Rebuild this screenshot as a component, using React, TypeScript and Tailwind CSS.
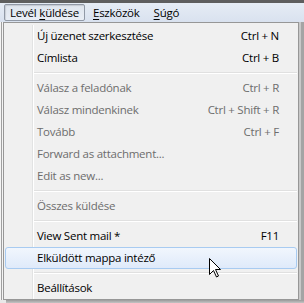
import React from "react";

type Item =
  | { kind: "item"; label: string; shortcut?: string; disabled?: boolean; active?: boolean }
  | { kind: "sep" };

const items: Item[] = [
  { kind: "item", label: "Új üzenet szerkesztése", shortcut: "Ctrl + N" },
  { kind: "item", label: "Címlista", shortcut: "Ctrl + B" },
  { kind: "sep" },
  { kind: "item", label: "Válasz a feladónak", shortcut: "Ctrl + R", disabled: true },
  { kind: "item", label: "Válasz mindenkinek", shortcut: "Ctrl + Shift + R", disabled: true },
  { kind: "item", label: "Tovább", shortcut: "Ctrl + F", disabled: true },
  { kind: "item", label: "Forward as attachment...", disabled: true },
  { kind: "item", label: "Edit as new...", disabled: true },
  { kind: "sep" },
  { kind: "item", label: "Összes küldése", disabled: true },
  { kind: "sep" },
  { kind: "item", label: "View Sent mail *", shortcut: "F11" },
  { kind: "item", label: "Elküldött mappa intéző", active: true },
  { kind: "sep" },
  { kind: "item", label: "Beállítások" },
];

const Gutter = () => (
  <div className="flex h-full shrink-0">
    <div className="w-[28px]" />
    <div className="w-px bg-[#e2e3e3]" />
    <div className="w-px bg-white" />
  </div>
);

const MenuRow = ({ item }: { item: Item }) => {
  if (item.kind === "sep") {
    return (
      <div className="flex h-[8px]">
        <Gutter />
        <div className="flex flex-1 flex-col pt-[3px] pr-[1px]">
          <div className="h-px bg-[#e0e0e0]" />
          <div className="h-px bg-white" />
        </div>
      </div>
    );
  }

  if (item.active) {
    return (
      <div className="mx-[1px] flex h-[22px] items-center rounded-[3px] border border-[#a8cbf1] bg-gradient-to-b from-[#f1f6fd] to-[#dfeafa] pl-[31px] pr-[17px] text-black">
        <span className="flex-1 whitespace-nowrap">{item.label}</span>
      </div>
    );
  }

  return (
    <div className={`flex h-[22px] ${item.disabled ? "text-[#6d6d6d]" : "text-black"}`}>
      <Gutter />
      <div className="flex flex-1 items-center pl-[3px] pr-[19px]">
        <span className="flex-1 whitespace-nowrap">{item.label}</span>
        {item.shortcut && <span className="whitespace-nowrap">{item.shortcut}</span>}
      </div>
    </div>
  );
};

const Cursor = () => (
  <svg
    className="absolute left-[209px] top-[258px]"
    width="13"
    height="20"
    viewBox="0 0 13 20"
  >
    <path
      d="M0.5 0.5 L0.5 16.5 L4.5 12.5 L7.5 19 L9.5 18 L6.5 11.5 L11.5 11.5 Z"
      fill="white"
      stroke="black"
      strokeWidth="1"
      strokeLinejoin="miter"
    />
  </svg>
);

export default function App() {
  return (
    <div className="relative h-[303px] w-[304px] overflow-hidden bg-[#f0f0f0] font-['Segoe_UI','Open_Sans',sans-serif] text-[11.5px] leading-none tracking-[-0.25px]">
      <div className="h-[3px] bg-[#5e5e5e]" />
      <div className="flex h-[19px] items-center bg-gradient-to-b from-[#e6ecf5] to-[#d9e2ef] text-black">
        <div className="ml-[4px] flex h-[17px] w-[81px] items-center rounded-[2px] border border-[#9199a6] bg-gradient-to-b from-[#dfe5ee] to-[#e9eef5] pl-[5px] shadow-[inset_1px_1px_1px_rgba(0,0,0,0.12)]">
          Levél <span className="ml-[3px] underline underline-offset-[2px]">k</span>üldése
        </div>
        <div className="ml-[8px]">
          <span className="underline underline-offset-[2px]">E</span>szközök
        </div>
        <div className="ml-[14px]">
          <span className="underline underline-offset-[2px]">S</span>úgó
        </div>
      </div>
      <div className="flex">
        <div className="flex h-[278px] w-[3px] shrink-0 bg-[#f4f4f4]">
          <div className="ml-[1px] w-px bg-[#a0a0a0]" />
        </div>
        <div className="h-[278px] w-[296px] shrink-0 border border-[#979797] bg-[#f0f0f0] pt-[2px]">
          {items.map((item, i) => (
            <MenuRow key={i} item={item} />
          ))}
        </div>
        <div className="flex h-[278px] flex-1">
          <div className="w-[2px] bg-[#c8c8c8]" />
          <div className="flex-1 bg-[#a4a4a4]" />
        </div>
      </div>
      <div className="flex h-[3px]">
        <div className="w-[6px] bg-[#e8e8e8]" />
        <div className="flex-1 bg-gradient-to-b from-[#9a9a9a] to-[#c4c4c4]" />
      </div>
      <Cursor />
    </div>
  );
}
